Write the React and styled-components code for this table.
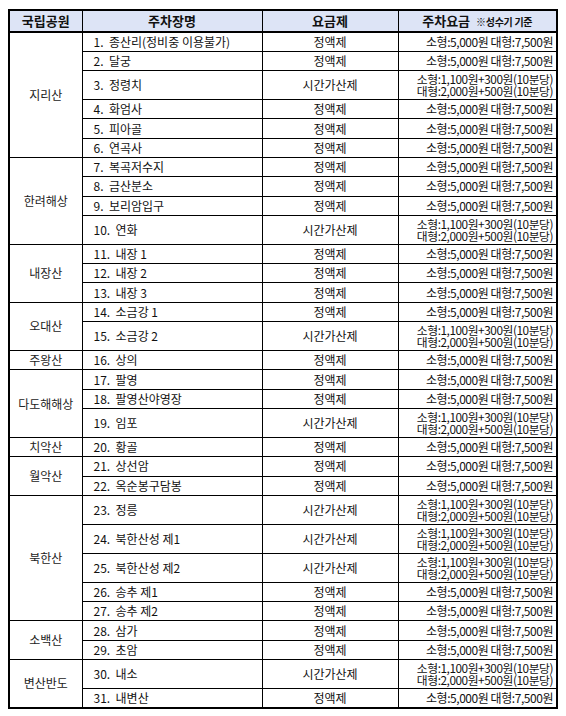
import React from "react";
import styled, {createGlobalStyle} from "styled-components";

const GlobalStyle = createGlobalStyle`
  body {
    margin: 0;
    background: #fff;
    font-family: "Noto Sans CJK KR", "Noto Sans", sans-serif;
  }
`;

const Page = styled.div`
  padding: 9px 10px 0 8px;
`;

const Table = styled.table`
  width: 548px;
  border-collapse: collapse;
  table-layout: fixed;
  border: 2px solid #000;
  color: #111;
`;

const Th = styled.th`
  height: 20px;
  padding: 0;
  background: #dde4f6;
  border: 1px solid #000;
  border-bottom: 2px solid #000;
  font-size: 13px;
  font-weight: bold;
  line-height: 16px;
  text-align: center;
  white-space: nowrap;
`;

const Small = styled.span`
  font-size: 10px;
  margin-left: 6px;
  letter-spacing: -0.3px;
`;

const Tr = styled.tr`
  height: ${(p) => (p.$tall ? "29px" : "19.3px")};
`;

const Td = styled.td`
  padding: 0;
  border: 1px solid #000;
  border-top-color: ${(p) => (p.$groupStart ? "#000" : "#555")};
  font-size: 12px;
  line-height: 14px;
  white-space: nowrap;
  vertical-align: middle;
`;

const ParkCell = styled(Td)`
  text-align: center;
  color: #222;
`;

const NameCell = styled(Td)`
  padding-left: 11px;
  text-align: left;
`;

const TypeCell = styled(Td)`
  text-align: center;
`;

const FeeCell = styled(Td)`
  padding-right: 3px;
  text-align: right;
  letter-spacing: -0.45px;
  font-size: ${(p) => (p.$tall ? "11.8px" : "12px")};
  line-height: ${(p) => (p.$tall ? "12px" : "14px")};
`;

const FLAT = "정액제";
const TIME = "시간가산제";

const groups = [
  {park: "지리산", lots: [
    ["종산리(정비중 이용불가)", FLAT], ["달궁", FLAT], ["정령치", TIME],
    ["화엄사", FLAT], ["피아골", FLAT], ["연곡사", FLAT]]},
  {park: "한려해상", lots: [
    ["복곡저수지", FLAT], ["금산분소", FLAT], ["보리암입구", FLAT], ["연화", TIME]]},
  {park: "내장산", lots: [["내장 1", FLAT], ["내장 2", FLAT], ["내장 3", FLAT]]},
  {park: "오대산", lots: [["소금강 1", FLAT], ["소금강 2", TIME]]},
  {park: "주왕산", lots: [["상의", FLAT]]},
  {park: "다도해해상", lots: [["팔영", FLAT], ["팔영산야영장", FLAT], ["임포", TIME]]},
  {park: "치악산", lots: [["황골", FLAT]]},
  {park: "월악산", lots: [["상선암", FLAT], ["옥순봉구담봉", FLAT]]},
  {park: "북한산", lots: [
    ["정릉", TIME], ["북한산성 제1", TIME], ["북한산성 제2", TIME],
    ["송추 제1", FLAT], ["송추 제2", FLAT]]},
  {park: "소백산", lots: [["삼가", FLAT], ["초암", FLAT]]},
  {park: "변산반도", lots: [["내소", TIME], ["내변산", FLAT]]},
];

const Fee = ({type}) =>
  type === FLAT ? (
    <>소형:5,000원 대형:7,500원</>
  ) : (
    <>
      소형:1,100원+300원(10분당)
      <br />
      대형:2,000원+500원(10분당)
    </>
  );

const App = () => {
  let num = 0;
  return (
    <Page>
      <GlobalStyle />
      <Table>
        <colgroup>
          <col style={{width: 73}} />
          <col style={{width: 180}} />
          <col style={{width: 136}} />
          <col style={{width: 159}} />
        </colgroup>
        <thead>
          <tr>
            <Th>국립공원</Th>
            <Th>주차장명</Th>
            <Th>요금제</Th>
            <Th>
              주차요금<Small>※성수기 기준</Small>
            </Th>
          </tr>
        </thead>
        <tbody>
          {groups.map((group) =>
            group.lots.map(([name, type], i) => {
              num += 1;
              const first = i === 0;
              const tall = type === TIME;
              return (
                <Tr key={num} $tall={tall}>
                  {first && (
                    <ParkCell rowSpan={group.lots.length} $groupStart>
                      {group.park}
                    </ParkCell>
                  )}
                  <NameCell $groupStart={first}>
                    {num}.&nbsp;&nbsp;{name}
                  </NameCell>
                  <TypeCell $groupStart={first}>{type}</TypeCell>
                  <FeeCell $groupStart={first} $tall={tall}>
                    <Fee type={type} />
                  </FeeCell>
                </Tr>
              );
            })
          )}
        </tbody>
      </Table>
    </Page>
  );
};

export default App;
